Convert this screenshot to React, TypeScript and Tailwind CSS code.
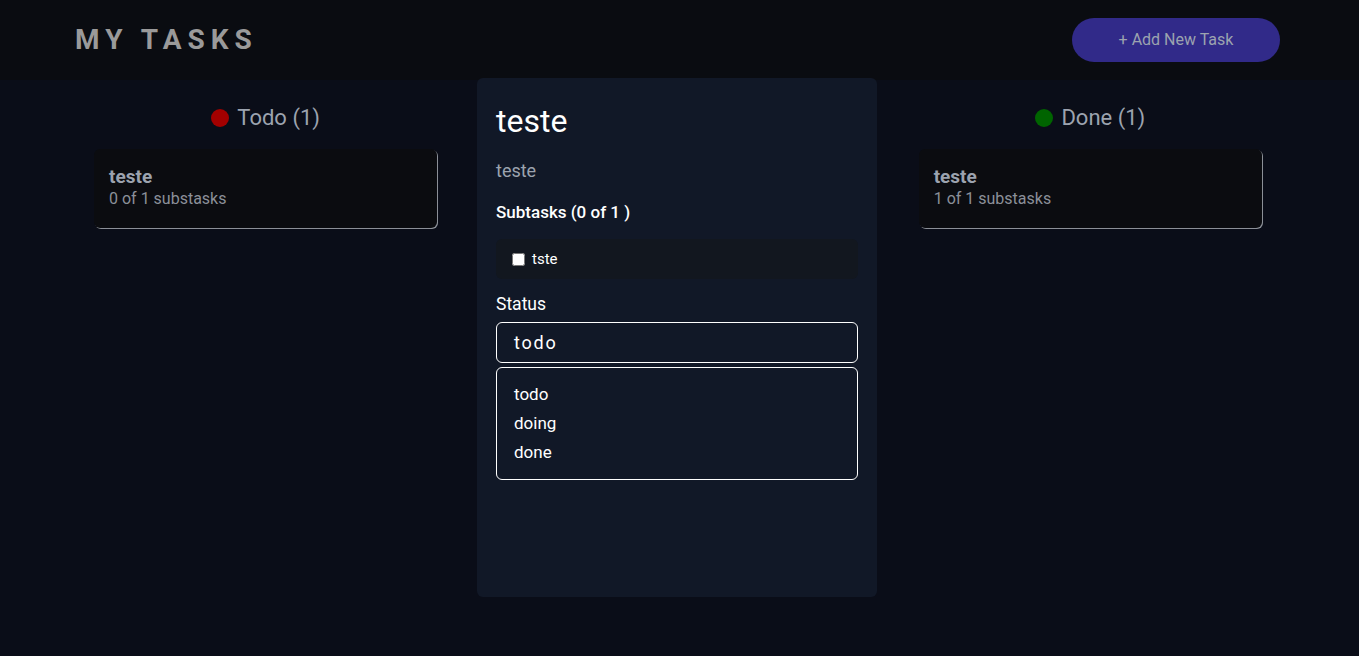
import React from 'react'

type Task = { id: number; title: string; done: number; total: number }

const COLUMNS: { name: string; dot: string; tasks: Task[] }[] = [
  { name: 'Todo', dot: 'bg-[#a30000]', tasks: [{ id: 1, title: 'teste', done: 0, total: 1 }] },
  { name: 'Doing', dot: 'bg-[#c7a200]', tasks: [] },
  { name: 'Done', dot: 'bg-[#006400]', tasks: [{ id: 2, title: 'teste', done: 1, total: 1 }] },
]

function TaskCard({ task }: { task: Task }) {
  return (
    <div className="h-[79px] rounded-md bg-[#0b0c10] px-[15px] pt-[17px] shadow-[1px_1px_0_#8b8f97]">
      <p className="text-[19px] font-bold leading-[22px] text-[#9ca3af]">{task.title}</p>
      <p className="text-[16px] leading-[22px] text-[#8b9099]">
        {task.done} of {task.total} substasks
      </p>
    </div>
  )
}

export default function App() {
  return (
    <div className="relative min-h-[656px] bg-[#0a0d18] font-['Roboto','Liberation_Sans',sans-serif]">
      <header className="h-[80px] bg-[#0a0c11]">
        <div className="ml-[75px] flex h-full w-[1205px] items-center justify-between">
          <h1 className="text-[28px] font-bold tracking-[0.215em] text-[#9a9a9a]">MY TASKS</h1>
          <button
            type="button"
            className="h-[44px] w-[208px] rounded-full bg-[#312a89] text-[16px] text-[#9ca3af]"
          >
            + Add New Task
          </button>
        </div>
      </header>

      <main className="ml-[94px] grid w-[1168px] grid-cols-3 gap-[69px] pt-[24px]">
        {COLUMNS.map((col) => (
          <section key={col.name}>
            <h2 className="flex items-center justify-center gap-[8px] text-[22px] leading-[28px] text-[#9ca3af]">
              <span className={`h-[18px] w-[18px] rounded-full ${col.dot}`} />
              {col.name} ({col.tasks.length})
            </h2>
            <div className="mt-[17px] flex flex-col gap-4">
              {col.tasks.map((task) => (
                <TaskCard key={task.id} task={task} />
              ))}
            </div>
          </section>
        ))}
      </main>

      {/* task detail modal */}
      <div className="absolute left-[477px] top-[78px] h-[519px] w-[400px] rounded-md bg-[#111827] px-[19px] pt-[24px] text-white">
        <h3 className="text-[32px] leading-[38px]">teste</h3>
        <p className="mt-[17px] text-[18px] leading-[28px] text-[#9ca3af]">teste</p>
        <p className="mt-[15px] text-[17px] font-medium leading-[24px]">Subtasks (0 of 1 )</p>
        <label className="mt-[15px] flex h-[40px] items-center gap-[7px] rounded-md bg-[#12171f] px-[16px] text-[15px]">
          <input type="checkbox" className="h-[13px] w-[13px]" />
          tste
        </label>
        <p className="mt-[13px] text-[17.5px] leading-[24px]">Status</p>
        <div className="mt-[6px] flex h-[41px] items-center rounded-md border border-white px-[17px] text-[18px] tracking-[0.1em]">
          todo
        </div>
        <ul className="mt-[4px] rounded-md border border-white px-[17px] py-[12px] text-[17px] leading-[29px]">
          <li>todo</li>
          <li>doing</li>
          <li>done</li>
        </ul>
      </div>
    </div>
  )
}
